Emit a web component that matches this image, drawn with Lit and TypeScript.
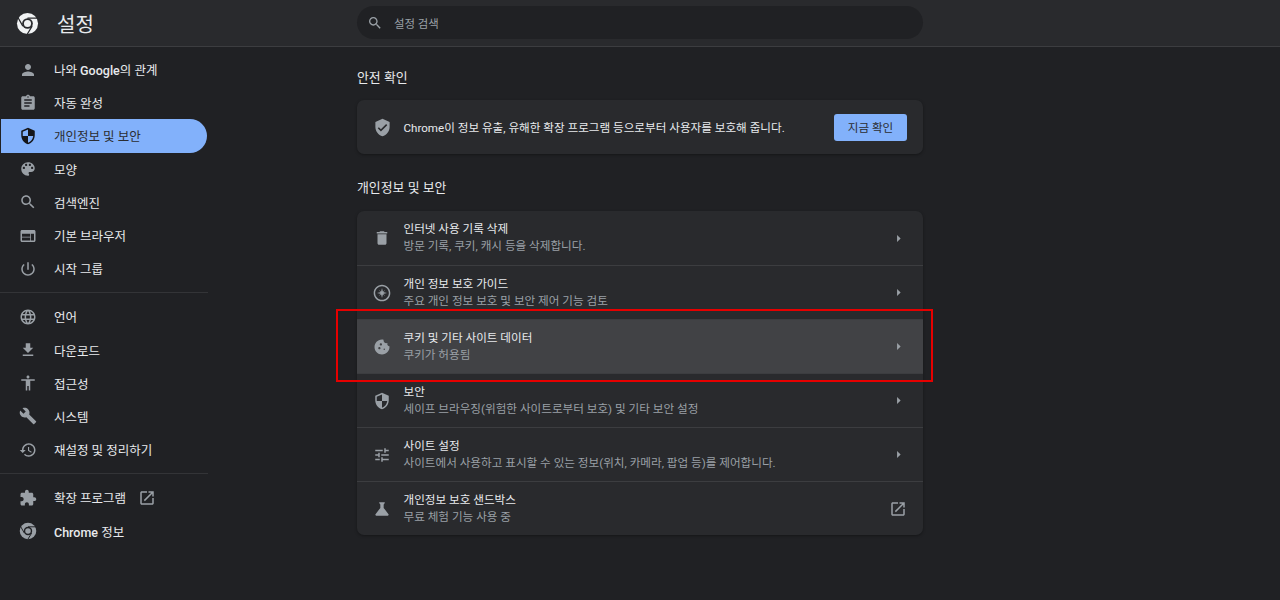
import { LitElement, html, css, svg } from 'lit'
import { customElement } from 'lit/decorators.js'

const icons: Record<string, string> = {
  person: 'M12 12c2.21 0 4-1.79 4-4s-1.79-4-4-4-4 1.79-4 4 1.79 4 4 4zm0 2c-2.67 0-8 1.34-8 4v2h16v-2c0-2.66-5.33-4-8-4z',
  assignment: 'M19 3h-4.18C14.4 1.84 13.3 1 12 1c-1.3 0-2.4.84-2.82 2H5c-1.1 0-2 .9-2 2v14c0 1.1.9 2 2 2h14c1.1 0 2-.9 2-2V5c0-1.1-.9-2-2-2zm-7 0c.55 0 1 .45 1 1s-.45 1-1 1-1-.45-1-1 .45-1 1-1zm2 14H7v-2h7v2zm3-4H7v-2h10v2zm0-4H7V7h10v2z',
  security: 'M12 1L3 5v6c0 5.55 3.84 10.74 9 12 5.16-1.26 9-6.45 9-12V5l-9-4zm0 10.99h7c-.53 4.12-3.28 7.79-7 8.94V12H5V6.3l7-3.11v8.8z',
  palette: 'M12 3c-4.97 0-9 4.03-9 9s4.03 9 9 9c.83 0 1.5-.67 1.5-1.5 0-.39-.15-.74-.39-1.01-.23-.26-.38-.61-.38-.99 0-.83.67-1.5 1.5-1.5H16c2.76 0 5-2.24 5-5 0-4.42-4.03-8-9-8zm-5.5 9c-.83 0-1.5-.67-1.5-1.5S5.67 9 6.5 9 8 9.67 8 10.5 7.33 12 6.5 12zm3-4C8.67 8 8 7.33 8 6.5S8.67 5 9.5 5s1.5.67 1.5 1.5S10.33 8 9.5 8zm5 0c-.83 0-1.5-.67-1.5-1.5S13.67 5 14.5 5s1.5.67 1.5 1.5S15.33 8 14.5 8zm3 4c-.83 0-1.5-.67-1.5-1.5S16.67 9 17.5 9s1.5.67 1.5 1.5-.67 1.5-1.5 1.5z',
  search: 'M15.5 14h-.79l-.28-.27C15.41 12.59 16 11.11 16 9.5 16 5.91 13.09 3 9.5 3S3 5.91 3 9.5 5.91 16 9.5 16c1.61 0 3.09-.59 4.23-1.57l.27.28v.79l5 4.99L20.49 19l-4.99-5zm-6 0C7.01 14 5 11.99 5 9.5S7.01 5 9.5 5 14 7.01 14 9.5 11.99 14 9.5 14z',
  web: 'M20 4H4c-1.1 0-1.99.9-1.99 2L2 18c0 1.1.9 2 2 2h16c1.1 0 2-.9 2-2V6c0-1.1-.9-2-2-2zm-5 14H4v-4h11v4zm0-5H4V9h11v4zm5 5h-4V9h4v9z',
  power: 'M13 3h-2v10h2V3zm4.83 2.17l-1.42 1.42C17.99 7.86 19 9.81 19 12c0 3.87-3.13 7-7 7s-7-3.13-7-7c0-2.19 1.01-4.14 2.58-5.42L6.17 5.17C4.23 6.82 3 9.26 3 12c0 4.97 4.03 9 9 9s9-4.03 9-9c0-2.74-1.23-5.18-3.17-6.83z',
  language: 'M11.99 2C6.47 2 2 6.48 2 12s4.47 10 9.99 10C17.52 22 22 17.52 22 12S17.52 2 11.99 2zm6.93 6h-2.95c-.32-1.25-.78-2.45-1.38-3.56 1.84.63 3.37 1.91 4.33 3.56zM12 4.04c.83 1.2 1.48 2.53 1.91 3.96h-3.82c.43-1.43 1.08-2.76 1.91-3.96zM4.26 14C4.1 13.36 4 12.69 4 12s.1-1.36.26-2h3.38c-.08.66-.14 1.32-.14 2 0 .68.06 1.34.14 2H4.26zm.82 2h2.95c.32 1.25.78 2.45 1.38 3.56-1.84-.63-3.37-1.9-4.33-3.56zm2.95-8H5.08c.96-1.66 2.49-2.93 4.33-3.56C8.81 5.55 8.35 6.75 8.03 8zM12 19.96c-.83-1.2-1.48-2.53-1.91-3.96h3.82c-.43 1.43-1.08 2.76-1.91 3.96zM14.34 14H9.66c-.09-.66-.16-1.32-.16-2 0-.68.07-1.35.16-2h4.68c.09.65.16 1.32.16 2 0 .68-.07 1.34-.16 2zm.25 5.56c.6-1.11 1.06-2.31 1.38-3.56h2.95c-.96 1.65-2.49 2.93-4.33 3.56zM16.36 14c.08-.66.14-1.32.14-2 0-.68-.06-1.34-.14-2h3.38c.16.64.26 1.31.26 2s-.1 1.36-.26 2h-3.38z',
  download: 'M19 9h-4V3H9v6H5l7 7 7-7zM5 18v2h14v-2H5z',
  accessibility: 'M12 2c1.1 0 2 .9 2 2s-.9 2-2 2-2-.9-2-2 .9-2 2-2zm9 7h-6v13h-2v-6h-2v6H9V9H3V7h18v2z',
  build: 'M22.7 19l-9.1-9.1c.9-2.3.4-5-1.5-6.9-2-2-5-2.4-7.4-1.3L9 6 6 9 1.6 4.7C.4 7.1.9 10.1 2.9 12.1c1.9 1.9 4.6 2.4 6.9 1.5l9.1 9.1c.4.4 1 .4 1.4 0l2.3-2.3c.5-.4.5-1.1.1-1.4z',
  restore: 'M13 3c-4.97 0-9 4.03-9 9H1l3.89 3.89.07.14L9 12H6c0-3.87 3.13-7 7-7s7 3.13 7 7-3.13 7-7 7c-1.93 0-3.68-.79-4.94-2.06l-1.42 1.42C8.27 19.99 10.51 21 13 21c4.97 0 9-4.03 9-9s-4.03-9-9-9zm-1 5v5l4.28 2.54.72-1.21-3.5-2.08V8H12z',
  extension: 'M20.5 11H19V7c0-1.1-.9-2-2-2h-4V3.5C13 2.12 11.88 1 10.5 1S8 2.12 8 3.5V5H4c-1.1 0-1.99.9-1.99 2v3.8H3.5c1.49 0 2.7 1.21 2.7 2.7s-1.21 2.7-2.7 2.7H2V20c0 1.1.9 2 2 2h3.8v-1.5c0-1.49 1.21-2.7 2.7-2.7 1.49 0 2.7 1.21 2.7 2.7V22H17c1.1 0 2-.9 2-2v-4h1.5c1.38 0 2.5-1.12 2.5-2.5S21.88 11 20.5 11z',
  launch: 'M19 19H5V5h7V3H5c-1.11 0-2 .9-2 2v14c0 1.1.89 2 2 2h14c1.1 0 2-.9 2-2v-7h-2v7zM14 3v2h3.59l-9.83 9.83 1.41 1.41L19 6.41V10h2V3h-7z',
  verified: 'M12 1L3 5v6c0 5.55 3.84 10.74 9 12 5.16-1.26 9-6.45 9-12V5l-9-4zm-2 16l-4-4 1.41-1.41L10 14.17l6.59-6.59L18 9l-8 8z',
  trash: 'M6 19c0 1.1.9 2 2 2h8c1.1 0 2-.9 2-2V7H6v12zM19 4h-3.5l-1-1h-5l-1 1H5v2h14V4z',
  compass: 'M12 2C6.48 2 2 6.48 2 12s4.48 10 10 10 10-4.48 10-10S17.52 2 12 2zm0 18.2c-4.52 0-8.2-3.68-8.2-8.2S7.48 3.8 12 3.8s8.2 3.68 8.2 8.2-3.68 8.2-8.2 8.2zM12 6l1.2 4.8L18 12l-4.8 1.2L12 18l-1.2-4.8L6 12l4.8-1.2z M8 8l3 2.4-.6.6zM16 8l-2.4 3-.6-.6zM16 16l-3-2.4.6-.6zM8 16l2.4-3 .6.6z',
  cookie: 'M21.95 10.99c-1.79-.03-3.7-1.95-2.68-4.22-2.97 1-5.78-1.59-5.19-4.56C7.11.74 2 6.41 2 12c0 5.52 4.48 10 10 10 5.89 0 10.54-5.08 9.95-11.01zM8.5 15c-.83 0-1.5-.67-1.5-1.5S7.67 12 8.5 12s1.5.67 1.5 1.5S9.33 15 8.5 15zm2-5C9.67 10 9 9.33 9 8.5S9.67 7 10.5 7s1.5.67 1.5 1.5-.67 1.5-1.5 1.5zm4.5 6c-.55 0-1-.45-1-1s.45-1 1-1 1 .45 1 1-.45 1-1 1z',
  tune: 'M3 17v2h6v-2H3zM3 5v2h10V5H3zm10 16v-2h8v-2h-8v-2h-2v6h2zM7 9v2H3v2h4v2h2V9H7zm14 4v-2H11v2h10zm-6-4h2V7h4V5h-4V3h-2v6z',
  flask: 'M19.8 18.4L14 10.67V6.5l1.35-1.69c.26-.33.03-.81-.39-.81H9.04c-.42 0-.65.48-.39.81L10 6.5v4.17L4.2 18.4c-.49.66-.02 1.6.8 1.6h14c.82 0 1.29-.94.8-1.6z',
  arrow: 'M10 17l5-5-5-5v10z',
}

const icon = (name: string, size = 18) => html`<svg class="icon" width=${size} height=${size} viewBox="0 0 24 24" fill="currentColor">${svg`<path d=${icons[name]}></path>`}</svg>`

// chrome logo, the ring with three swooshes and a centre dot
const chromeLogo = (size: number, color: string, bg: string) => html`
  <svg class="icon" width=${size} height=${size} viewBox="0 0 24 24">
    ${svg`
      <circle cx="12" cy="12" r="11" fill=${color}></circle>
      <circle cx="12" cy="12" r="5.6" fill=${bg}></circle>
      <circle cx="12" cy="12" r="3.7" fill=${color}></circle>
      <path d="M12 6.4H22.4M7.15 14.8L2 5.8M16.85 14.8L11.7 23.2" stroke=${bg} stroke-width="1.3" fill="none"></path>
    `}
  </svg>`

const navTop = [
  { icon: 'person', label: html`나와 <b>Google</b>의 관계` },
  { icon: 'assignment', label: '자동 완성' },
  { icon: 'security', label: '개인정보 및 보안', active: true },
  { icon: 'palette', label: '모양' },
  { icon: 'search', label: '검색엔진' },
  { icon: 'web', label: '기본 브라우저' },
  { icon: 'power', label: '시작 그룹' },
]

const navMid = [
  { icon: 'language', label: '언어' },
  { icon: 'download', label: '다운로드' },
  { icon: 'accessibility', label: '접근성' },
  { icon: 'build', label: '시스템' },
  { icon: 'restore', label: '재설정 및 정리하기' },
]

const rows = [
  { icon: 'trash', title: '인터넷 사용 기록 삭제', sub: '방문 기록, 쿠키, 캐시 등을 삭제합니다.' },
  { icon: 'compass', size: 20, title: '개인 정보 보호 가이드', sub: '주요 개인 정보 보호 및 보안 제어 기능 검토' },
  { icon: 'cookie', title: '쿠키 및 기타 사이트 데이터', sub: '쿠키가 허용됨', hover: true },
  { icon: 'security', title: '보안', sub: '세이프 브라우징(위험한 사이트로부터 보호) 및 기타 보안 설정' },
  { icon: 'tune', title: '사이트 설정', sub: '사이트에서 사용하고 표시할 수 있는 정보(위치, 카메라, 팝업 등)를 제어합니다.' },
  { icon: 'flask', size: 20, title: '개인정보 보호 샌드박스', sub: '무료 체험 기능 사용 중', external: true },
]

@customElement('app-root')
export class AppRoot extends LitElement {
  static styles = css`
    :host {
      display: block;
      position: relative;
      height: 600px;
      overflow: hidden;
      background: #202124;
      color: #e8eaed;
      font-family: Roboto, 'Noto Sans CJK KR', sans-serif;
      font-size: 12px;
    }

    .icon {
      display: block;
      flex: none;
    }

    header {
      display: grid;
      grid-template-columns: 1fr 566px 1fr;
      align-items: center;
      height: 46px;
      background: #292a2d;
      border-bottom: 1px solid #3c3d40;
    }

    .brand {
      display: flex;
      align-items: center;
      gap: 18px;
      padding-left: 16px;
      font-size: 20px;
    }

    .search {
      display: flex;
      align-items: center;
      gap: 11px;
      height: 33px;
      margin-bottom: 1px;
      padding: 0 10px;
      border-radius: 17px;
      background: #202124;
      color: #9aa0a6;
      font-size: 11.4px;
    }

    .body {
      display: grid;
      grid-template-columns: 1fr 566px 1fr;
    }

    nav {
      width: 208px;
      padding-top: 6px;
    }

    .item {
      display: flex;
      align-items: center;
      gap: 17px;
      height: 33.2px;
      margin: 0 1px;
      padding-left: 18px;
      border-radius: 0 17px 17px 0;
      font-size: 12.5px;
      white-space: nowrap;
      color: #e8eaed;
    }

    .item .icon {
      color: #9aa0a6;
    }

    .item b {
      font-weight: 500;
    }

    .item.active {
      background: #82b1fb;
      color: #2b2d31;
    }

    .item.active .icon {
      color: #15161a;
    }

    .ext {
      display: flex;
      align-items: center;
      gap: 12px;
    }

    hr {
      height: 1px;
      margin: 7px 0;
      border: 0;
      background: #333437;
    }

    main {
      padding-top: 22px;
    }

    h2 {
      margin: 0 0 13px;
      font-size: 12.9px;
      font-weight: 400;
      line-height: 18px;
    }

    h2.second {
      margin-bottom: 14px;
    }

    .card {
      background: #292a2d;
      border-radius: 7px;
      box-shadow: 0 1px 3px rgba(0, 0, 0, 0.35);
    }

    .check {
      display: flex;
      align-items: center;
      gap: 11.5px;
      height: 54px;
      margin-bottom: 25px;
      padding: 0 16px 0 15px;
      font-size: 11.6px;
    }

    .check span {
      flex: 1;
    }

    .slot {
      display: flex;
      justify-content: center;
      flex: none;
      width: 20px;
      color: #9aa0a6;
    }

    button {
      width: 73px;
      height: 27px;
      border: 0;
      border-radius: 3px;
      background: #82b1fb;
      color: #2b2d31;
      font: inherit;
      font-size: 11.6px;
    }

    .row {
      display: flex;
      align-items: center;
      gap: 11.5px;
      box-sizing: border-box;
      height: 54px;
      padding: 0 15px;
      border-top: 1px solid #3c3d40;
    }

    .row:first-child {
      border-top: 0;
    }

    .row.hover {
      background: #414245;
    }

    .text {
      flex: 1;
      font-size: 11.6px;
      line-height: 17px;
    }

    .sub {
      color: #9aa0a6;
    }

    .mark {
      position: absolute;
      left: 336px;
      top: 309px;
      width: 593px;
      height: 69px;
      border: 2px solid #e60000;
      pointer-events: none;
    }
  `

  renderItem(item: { icon: string; label: unknown; active?: boolean }) {
    return html`
      <div class="item ${item.active ? 'active' : ''}">${icon(item.icon)}<span>${item.label}</span></div>
    `
  }

  render() {
    return html`
      <header>
        <div class="brand">${chromeLogo(23, '#f1f3f4', '#292a2d')}<span>설정</span></div>
        <div class="search">${icon('search', 16)}<span>설정 검색</span></div>
      </header>
      <div class="body">
        <nav>
          ${navTop.map((item) => this.renderItem(item))}
          <hr />
          ${navMid.map((item) => this.renderItem(item))}
          <hr />
          <div class="item">
            ${icon('extension')}<span class="ext">확장 프로그램 ${icon('launch')}</span>
          </div>
          <div class="item">${chromeLogo(18, '#9aa0a6', '#202124')}<span><b>Chrome</b> 정보</span></div>
        </nav>
        <main>
          <h2>안전 확인</h2>
          <div class="card check">
            <div class="slot">${icon('verified', 19)}</div>
            <span>Chrome이 정보 유출, 유해한 확장 프로그램 등으로부터 사용자를 보호해 줍니다.</span>
            <button>지금 확인</button>
          </div>
          <h2 class="second">개인정보 및 보안</h2>
          <div class="card">
            ${rows.map(
              (row) => html`
                <div class="row ${row.hover ? 'hover' : ''}">
                  <div class="slot">${icon(row.icon, row.size ?? 18)}</div>
                  <div class="text">
                    <div>${row.title}</div>
                    <div class="sub">${row.sub}</div>
                  </div>
                  <div class="slot">${row.external ? icon('launch') : icon('arrow', 17)}</div>
                </div>
              `,
            )}
          </div>
        </main>
      </div>
      <div class="mark"></div>
    `
  }
}

declare global {
  interface HTMLElementTagNameMap {
    'app-root': AppRoot
  }
}
